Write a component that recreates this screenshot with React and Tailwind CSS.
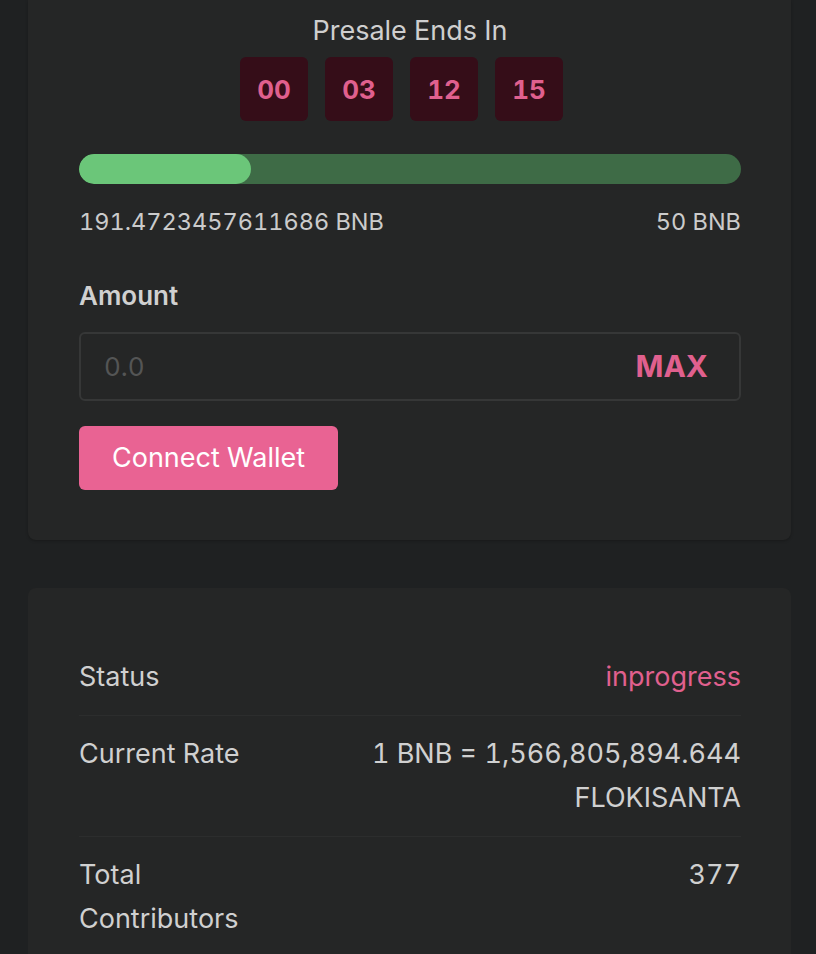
import React from 'react';

const COUNTDOWN = ['00', '03', '12', '15'];

const ROWS = [
  { label: 'Status', value: 'inprogress', accent: true },
  { label: 'Current Rate', value: '1 BNB = 1,566,805,894.644 FLOKISANTA' },
  { label: 'Total Contributors', value: '377' },
];

export default function App() {
  const raised = 26;

  return (
    <div className="min-h-screen bg-[#1f2122] pl-[28px] pr-[25px] pb-[40px] font-['Inter',sans-serif] tabular-nums text-[#d2d2d2]">
      <div className="rounded-b-lg bg-[#252626] pl-[51px] pr-[50px] pt-[13px] pb-[50px] shadow-[0_1px_3px_rgba(0,0,0,0.25)]">
        <div className="text-center text-[27px] leading-[36px] text-[#cfcfcf]">Presale Ends In</div>
        <div className="mt-[8px] flex justify-center">
          {COUNTDOWN.map((n) => (
            <div
              key={n}
              className="mr-[17px] flex h-[64px] w-[68px] items-center justify-center rounded-md bg-[#350d18] text-[26px] font-bold text-[#e0608e]"
            >
              {n}
            </div>
          ))}
        </div>

        <div className="mt-[33px] h-[30px] w-full overflow-hidden rounded-full bg-[#3e6b46]">
          <div className="h-full rounded-full bg-[#6bc679]" style={{ width: `${raised}%` }} />
        </div>
        <div className="mt-[23px] flex justify-between text-[23.5px] leading-[30px] text-[#cbcbcb]">
          <span>191.4723457611686 BNB</span>
          <span>50 BNB</span>
        </div>

        <div className="mt-[43px] text-[26px] font-semibold leading-[32px] text-[#d0d0d0]">Amount</div>
        <div className="mt-[20px] flex h-[69px] items-center justify-between rounded-md border-2 border-[#363737] pl-[23px] pr-[31px]">
          <input
            placeholder="0.0"
            className="w-full bg-transparent text-[26px] text-[#d0d0d0] outline-none placeholder:text-[#545555]"
          />
          <span className="text-[30px] font-bold text-[#e0608e]">MAX</span>
        </div>
        <button className="mt-[25px] h-[64px] rounded-md bg-[#e96393] px-[33px] text-[27px] text-white">
          Connect Wallet
        </button>
      </div>

      <div className="mt-[48px] rounded-lg bg-[#252626] pl-[51px] pr-[50px] pt-[51px] pb-[16px]">
        {ROWS.map((row, i) => (
          <div
            key={row.label}
            className={`flex justify-between gap-6 py-[16px] text-[27px] leading-[44px] ${i > 0 ? 'border-t border-[#2c2d2d]' : ''}`}
          >
            <span className="w-[170px] shrink-0 text-[#d0d0d0]">{row.label}</span>
            <span className={`max-w-[400px] text-right ${row.accent ? 'text-[#e0608e]' : 'text-[#d0d0d0]'}`}>
              {row.value}
            </span>
          </div>
        ))}
      </div>
    </div>
  );
}
